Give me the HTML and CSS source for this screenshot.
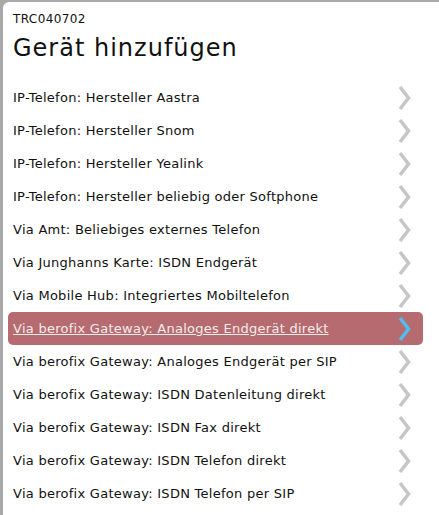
FILE: index.html
```html
<!DOCTYPE html>
<html lang="de">
<head>
<meta charset="utf-8">
<link rel="stylesheet" href="styles.css">
</head>
<body>
<div class="panel">
  <div class="code">TRC040702</div>
  <h1 class="title">Gerät hinzufügen</h1>
  <ul class="list">
    <li class="row"><span class="label">IP-Telefon: Hersteller Aastra</span><svg class="chev" viewBox="0 0 13 26"><polyline points="2,2 10.5,13 2,24"/></svg></li>
    <li class="row"><span class="label">IP-Telefon: Hersteller Snom</span><svg class="chev" viewBox="0 0 13 26"><polyline points="2,2 10.5,13 2,24"/></svg></li>
    <li class="row"><span class="label">IP-Telefon: Hersteller Yealink</span><svg class="chev" viewBox="0 0 13 26"><polyline points="2,2 10.5,13 2,24"/></svg></li>
    <li class="row"><span class="label">IP-Telefon: Hersteller beliebig oder Softphone</span><svg class="chev" viewBox="0 0 13 26"><polyline points="2,2 10.5,13 2,24"/></svg></li>
    <li class="row"><span class="label">Via Amt: Beliebiges externes Telefon</span><svg class="chev" viewBox="0 0 13 26"><polyline points="2,2 10.5,13 2,24"/></svg></li>
    <li class="row"><span class="label">Via Junghanns Karte: ISDN Endgerät</span><svg class="chev" viewBox="0 0 13 26"><polyline points="2,2 10.5,13 2,24"/></svg></li>
    <li class="row"><span class="label">Via Mobile Hub: Integriertes Mobiltelefon</span><svg class="chev" viewBox="0 0 13 26"><polyline points="2,2 10.5,13 2,24"/></svg></li>
    <li class="row active"><span class="label">Via berofix Gateway: Analoges Endgerät direkt</span><svg class="chev" viewBox="0 0 13 26"><polyline points="2,2 10.5,13 2,24"/></svg></li>
    <li class="row"><span class="label">Via berofix Gateway: Analoges Endgerät per SIP</span><svg class="chev" viewBox="0 0 13 26"><polyline points="2,2 10.5,13 2,24"/></svg></li>
    <li class="row"><span class="label">Via berofix Gateway: ISDN Datenleitung direkt</span><svg class="chev" viewBox="0 0 13 26"><polyline points="2,2 10.5,13 2,24"/></svg></li>
    <li class="row"><span class="label">Via berofix Gateway: ISDN Fax direkt</span><svg class="chev" viewBox="0 0 13 26"><polyline points="2,2 10.5,13 2,24"/></svg></li>
    <li class="row"><span class="label">Via berofix Gateway: ISDN Telefon direkt</span><svg class="chev" viewBox="0 0 13 26"><polyline points="2,2 10.5,13 2,24"/></svg></li>
    <li class="row"><span class="label">Via berofix Gateway: ISDN Telefon per SIP</span><svg class="chev" viewBox="0 0 13 26"><polyline points="2,2 10.5,13 2,24"/></svg></li>
  </ul>
</div>
</body>
</html>
```
FILE: styles.css
```css
html, body {
  margin: 0;
  padding: 0;
  height: 100%;
  overflow: hidden;
}
body {
  background: #a9a9a9;
  padding: 2px 0 0 3px;
  box-sizing: border-box;
  font-family: "DejaVu Sans", Verdana, sans-serif;
  color: #111;
}
.panel {
  background: #fff;
  border-top-left-radius: 6px;
  height: 100%;
  padding: 0 16px 0 5px;
  box-sizing: border-box;
}
.code {
  font-size: 12px;
  letter-spacing: 0.4px;
  padding: 10px 0 0 5px;
  line-height: 14px;
}
.title {
  font-size: 24px;
  letter-spacing: 1px;
  font-weight: normal;
  margin: 0;
  padding: 8px 0 0 5px;
  line-height: 28px;
}
.list {
  list-style: none;
  margin: 0;
  padding: 19px 0 0 0;
}
.row {
  height: 33px;
  display: flex;
  align-items: center;
  justify-content: space-between;
  padding: 0 12px 0 5px;
  font-size: 13px;
  letter-spacing: 0.27px;
  border-radius: 5px;
}
.chev {
  width: 13px;
  height: 26px;
  fill: none;
  stroke: #c6c6c6;
  stroke-width: 3.5;
}
.active {
  background: #b56b6f;
  color: #f4ecec;
}
.active .label {
  text-decoration: underline;
}
.active .chev {
  stroke: #4dbfef;
}
```
